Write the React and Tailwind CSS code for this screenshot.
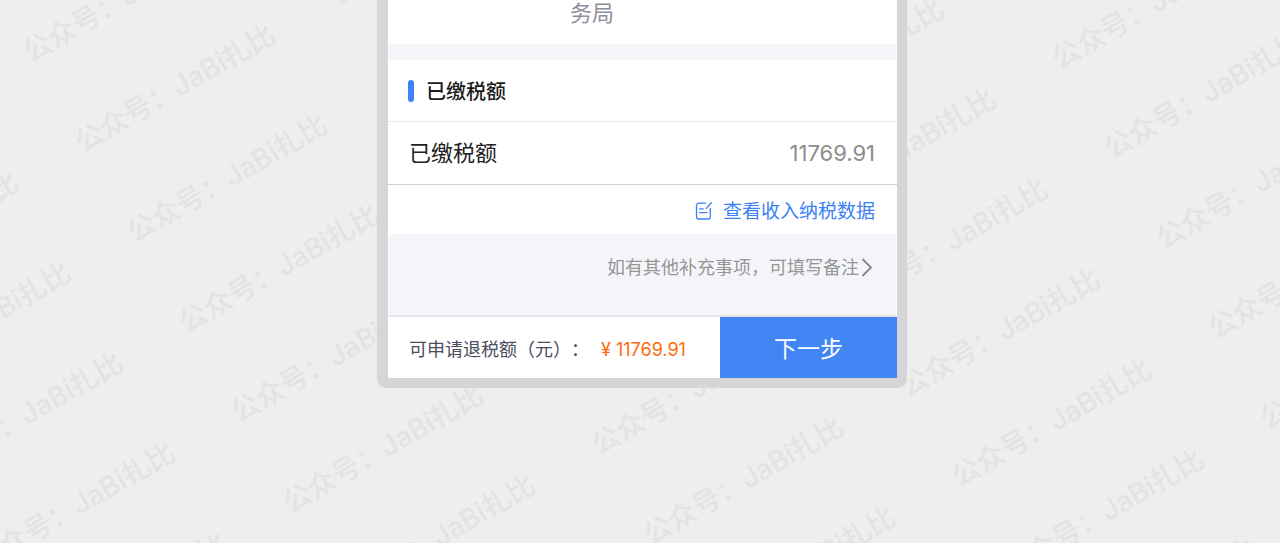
const WATERMARKS = Array.from({ length: 60 }, (_, i) => i);

function Watermark() {
  return (
    <div aria-hidden="true" className="pointer-events-none absolute inset-0 overflow-hidden">
      <div className="absolute top-[95px] -left-[293px] grid origin-top-left -rotate-30 grid-cols-[repeat(5,296px)] auto-rows-[104px] text-[28px] leading-10 font-medium text-[#e3e3e3]">
        {WATERMARKS.map((i) => (
          <span key={i} className="whitespace-nowrap">公众号：JaBi扎比</span>
        ))}
      </div>
    </div>
  );
}

function EditIcon() {
  return (
    <svg viewBox="0 0 18 20" className="h-5 w-[18px]" fill="none" stroke="currentColor" strokeWidth="1.3" strokeLinecap="round" strokeLinejoin="round" aria-hidden="true">
      <path d="M10.500 1.200H3.700a2.200 2.200 0 0 0-2.200 2.200v11.400a2.200 2.200 0 0 0 2.200 2.200h9.400a2.200 2.200 0 0 0 2.200-2.200V6.500" />
      <path d="M16.300 .8 11.200 6.600M4.600 6.800h3.600M4.600 10.600h7.400" />
    </svg>
  );
}

function ChevronIcon() {
  return (
    <svg viewBox="0 0 12 20" className="h-5 w-3" fill="none" stroke="#868686" strokeWidth="1.8" aria-hidden="true">
      <path d="M1.500 1 10 9.500 1.500 18" />
    </svg>
  );
}

export default function App() {
  return (
    <div className="relative min-h-screen overflow-hidden bg-[#eeeeee] pl-1 font-[Inter,'Noto_Sans_CJK_SC',sans-serif] [text-spacing-trim:space-all]">
      <Watermark />
      <main className="relative mx-auto w-full max-w-[530px] rounded-b-[10px] border-r-10 border-b-10 border-l-[11px] border-[#d6d6d6] bg-white">
        <p className="pb-[18px] pl-[182px] text-[22px] leading-[26px] text-[#8d909c]">务局</p>
        <div className="mx-px h-4 bg-[#f4f5f9]" />
        <section>
          <header className="flex items-center gap-3 border-b border-[#e9e9ec] px-5 py-[15px]">
            <span className="h-[22px] w-[6px] rounded-full bg-[#3f83f7]" />
            <h2 className="pt-[3px] text-[20px] leading-7 font-medium text-[#1c1c1c]">已缴税额</h2>
          </header>
          <dl className="flex items-center justify-between border-b border-[#cfcfcf] py-[15px] pr-[22px] pl-[21px] text-[22px] leading-8">
            <dt className="text-[#222222]">已缴税额</dt>
            <dd className="text-[#8c8c8c]">11769.91</dd>
          </dl>
          <div className="flex justify-end px-[22px] pt-3 pb-2">
            <a href="#income" className="flex items-center gap-[10px] text-[19px] leading-[29px] text-[#3d80f3]">
              <EditIcon />
              查看收入纳税数据
            </a>
          </div>
        </section>
        <div className="mx-px flex justify-end bg-[#f4f5f9] px-[23px] pt-5 pb-[35px]">
          <a href="#remark" className="flex items-center gap-[2px] text-[18px] leading-7 text-[#969696]">
            如有其他补充事项，可填写备注
            <ChevronIcon />
          </a>
        </div>
        <footer className="flex shadow-[0_-1px_2px_#d5d7e2]">
          <p className="flex flex-1 items-center gap-3 bg-white pt-1 pl-[21px] text-[18px] leading-7 whitespace-nowrap text-[#4a4d5e]">
            可申请退税额（元）：
            <strong className="font-normal text-[#ff6a0a]">¥ 11769.91</strong>
          </p>
          <button type="button" className="w-[177px] bg-[#4285f4] pt-4 pb-3 text-[23px] leading-[33px] text-white">
            下一步
          </button>
        </footer>
      </main>
    </div>
  );
}
